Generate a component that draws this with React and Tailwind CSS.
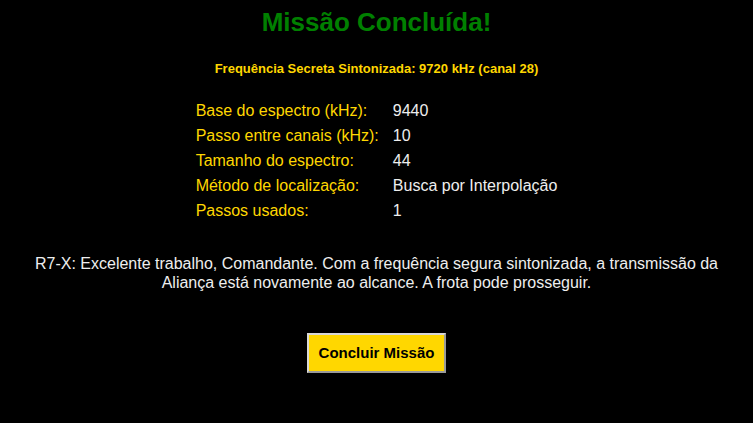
const rows = [
  ['Base do espectro (kHz):', '9440'],
  ['Passo entre canais (kHz):', '10'],
  ['Tamanho do espectro:', '44'],
  ['Método de localização:', 'Busca por Interpolação'],
  ['Passos usados:', '1'],
];

export default function App() {
  return (
    <div className="min-h-screen w-full bg-black text-center font-['Liberation_Sans',Arial,sans-serif] flex flex-col items-center">
      <h1 className="mt-[6px] text-[26px] leading-[32px] font-bold text-[#008000]">Missão Concluída!</h1>

      <p className="mt-[23px] text-[13px] leading-[16px] font-bold text-[#ffd700]">
        Frequência Secreta Sintonizada: 9720 kHz (canal 28)
      </p>

      <div className="mt-[21px] grid grid-cols-[auto_auto] gap-x-[14px] text-left text-[16px]">
        {rows.map(([label, value]) => (
          <div key={label} className="contents">
            <span className="leading-[25px] text-[#ffd700]">{label}</span>
            <span className="leading-[25px] text-[#eeeeee]">{value}</span>
          </div>
        ))}
      </div>

      <p className="mt-[31px] px-[30px] text-[16px] leading-[19px] text-[#eeeeee]">
        R7-X: Excelente trabalho, Comandante. Com a frequência segura sintonizada, a transmissão da Aliança está novamente ao alcance. A frota pode prosseguir.
      </p>

      <button className="mt-[41px] h-[40px] px-[10px] bg-[#ffd700] border-2 border-t-[#d8d8d8] border-l-[#d8d8d8] border-b-[#9a9a9a] border-r-[#9a9a9a] text-[15px] font-bold text-black">
        Concluir Missão
      </button>
    </div>
  );
}
